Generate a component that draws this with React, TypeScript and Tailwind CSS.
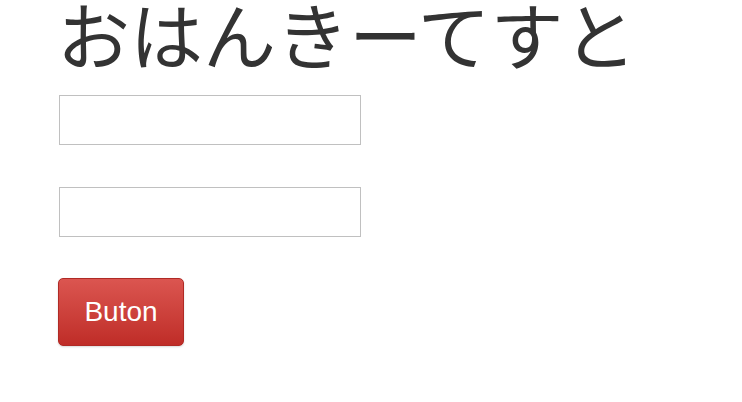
import React from "react";

export default function App() {
  return (
    <div className="min-h-screen bg-white pl-[59px]">
      <h1 className="-mt-[13px] -ml-[2px] text-[73px] leading-[90px] font-normal text-[#333] font-['Noto_Sans_CJK_JP','Noto_Sans_CJK_SC',sans-serif] whitespace-nowrap">
        おはんきーてすと
      </h1>
      <div className="flex flex-col items-start mt-[18px]">
        <input type="text" className="w-[302px] h-[50px] border border-[#c0c0c0] bg-white outline-none" />
        <input type="text" className="w-[302px] h-[50px] border border-[#c0c0c0] bg-white outline-none mt-[42px]" />
        <button className="mt-[41px] -ml-[1px] w-[126px] h-[68px] rounded-[5px] border border-[#b02a25] bg-gradient-to-b from-[#db5550] to-[#bf2c27] text-white text-[28px] font-['Liberation_Sans',Arial,sans-serif] shadow-[0_1px_2px_rgba(0,0,0,0.15)]">
          Buton
        </button>
      </div>
    </div>
  );
}
